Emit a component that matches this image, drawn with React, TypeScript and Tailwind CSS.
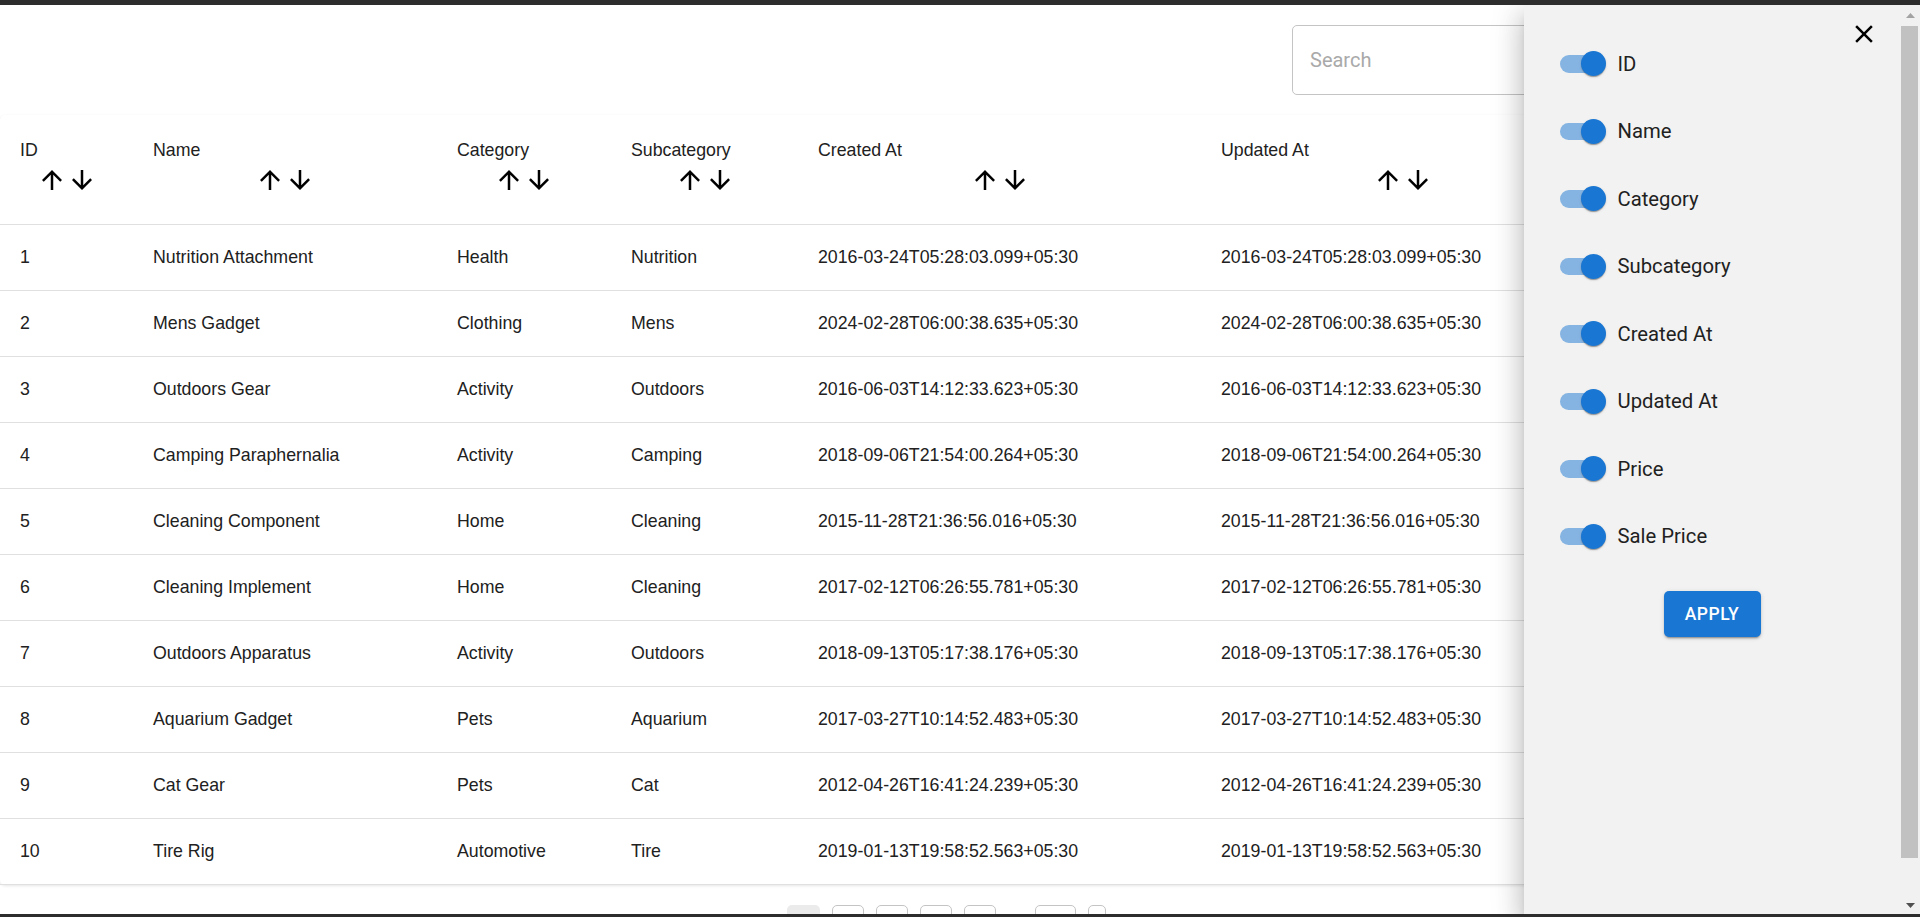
import React from "react";

const rows = [
  ["1", "Nutrition Attachment", "Health", "Nutrition", "2016-03-24T05:28:03.099+05:30"],
  ["2", "Mens Gadget", "Clothing", "Mens", "2024-02-28T06:00:38.635+05:30"],
  ["3", "Outdoors Gear", "Activity", "Outdoors", "2016-06-03T14:12:33.623+05:30"],
  ["4", "Camping Paraphernalia", "Activity", "Camping", "2018-09-06T21:54:00.264+05:30"],
  ["5", "Cleaning Component", "Home", "Cleaning", "2015-11-28T21:36:56.016+05:30"],
  ["6", "Cleaning Implement", "Home", "Cleaning", "2017-02-12T06:26:55.781+05:30"],
  ["7", "Outdoors Apparatus", "Activity", "Outdoors", "2018-09-13T05:17:38.176+05:30"],
  ["8", "Aquarium Gadget", "Pets", "Aquarium", "2017-03-27T10:14:52.483+05:30"],
  ["9", "Cat Gear", "Pets", "Cat", "2012-04-26T16:41:24.239+05:30"],
  ["10", "Tire Rig", "Automotive", "Tire", "2019-01-13T19:58:52.563+05:30"],
];

const cols = [
  { label: "ID", w: "w-[133px]" },
  { label: "Name", w: "w-[304px]" },
  { label: "Category", w: "w-[174px]" },
  { label: "Subcategory", w: "w-[187px]" },
  { label: "Created At", w: "w-[403px]" },
  { label: "Updated At", w: "w-[403px]" },
];

const toggles = ["ID", "Name", "Category", "Subcategory", "Created At", "Updated At", "Price", "Sale Price"];

function ArrowUp() {
  return (
    <span className="w-[30px] h-[30px] flex items-center justify-center">
      <svg width="30" height="30" viewBox="0 0 24 24" fill="#000">
        <path d="M4 12l1.41 1.41L11 7.83V20h2V7.83l5.58 5.59L20 12l-8-8-8 8z" />
      </svg>
    </span>
  );
}

function ArrowDown() {
  return (
    <span className="w-[30px] h-[30px] flex items-center justify-center">
      <svg width="30" height="30" viewBox="0 0 24 24" fill="#000">
        <path d="M20 12l-1.41-1.41L13 16.17V4h-2v12.17l-5.58-5.59L4 12l8 8 8-8z" />
      </svg>
    </span>
  );
}

function Switch() {
  return (
    <div className="relative w-[72.5px] h-[47.5px] shrink-0">
      <div className="absolute left-[15px] top-[15px] w-[42.5px] h-[17.5px] rounded-full bg-[#1976d2] opacity-50" />
      <div className="absolute left-[36.25px] top-[11.25px] w-[25px] h-[25px] rounded-full bg-[#1976d2] shadow-[0px_2px_1px_-1px_rgba(0,0,0,0.2),0px_1px_1px_0px_rgba(0,0,0,0.14),0px_1px_3px_0px_rgba(0,0,0,0.12)]" />
    </div>
  );
}

export default function App() {
  return (
    <div className="w-[1920px] h-[917px] flex flex-col overflow-hidden bg-white">
      <div className="h-[5px] bg-[#2d2d2d] shrink-0" />
      <div className="flex-1 flex min-h-0">
        <div className="w-[1900px] relative overflow-hidden flex flex-col font-['Liberation_Sans',Arial,sans-serif] text-[#212121]">
          <div className="flex justify-end pt-[20px] pr-[20px]">
            <input
              placeholder="Search"
              className="w-[588px] h-[70px] border border-[#c4c4c4] rounded-[5px] pl-[17px] text-[20px] font-['Roboto',sans-serif] outline-none placeholder:text-[#a9a9a9]"
            />
          </div>
          <div className="mt-[20px] rounded-[5px] shadow-[0px_1px_3px_0px_rgba(0,0,0,0.10)] bg-white">
            <div className="h-[110px] flex border-b border-[#e0e0e0]">
              {cols.map((c) => (
                <div key={c.label} className={`${c.w} shrink-0 pt-[20px] px-[20px] flex flex-col`}>
                  <div className="h-[30px] leading-[30px] text-[17.75px]">{c.label}</div>
                  <div className="h-[30px] flex justify-center">
                    <ArrowUp />
                    <ArrowDown />
                  </div>
                </div>
              ))}
              <div className="flex-1" />
            </div>
            {rows.map((r) => (
              <div key={r[0]} className="h-[66px] flex items-center border-b border-[#e0e0e0] text-[17.75px] leading-[25px]">
                {[r[0], r[1], r[2], r[3], r[4], r[4]].map((v, i) => (
                  <div key={i} className={`${cols[i].w} shrink-0 px-[20px] whitespace-nowrap`}>
                    {v}
                  </div>
                ))}
                <div className="flex-1" />
              </div>
            ))}
          </div>
          <div className="mt-[20px] flex justify-center gap-[12px] text-[16px] font-['Roboto',sans-serif] pr-[8px]">
            <div className="w-[33px] h-[33px] rounded-[5px] bg-[#ebebeb] flex justify-center pt-[6px]">1</div>
            <div className="w-[32px] h-[33px] rounded-[5px] border border-[#c4c4c4] flex justify-center pt-[5px]">2</div>
            <div className="w-[32px] h-[33px] rounded-[5px] border border-[#c4c4c4] flex justify-center pt-[5px]">3</div>
            <div className="w-[32px] h-[33px] rounded-[5px] border border-[#c4c4c4] flex justify-center pt-[5px]">4</div>
            <div className="w-[32px] h-[33px] rounded-[5px] border border-[#c4c4c4] flex justify-center pt-[5px]">5</div>
            <div className="w-[15px] h-[33px] flex justify-center pt-[5px]">…</div>
            <div className="w-[41px] h-[33px] rounded-[5px] border border-[#c4c4c4] flex justify-center pt-[5px]">100</div>
            <div className="w-[18px] h-[33px] rounded-[5px] border border-[#c4c4c4] flex justify-center pt-[5px]">›</div>
          </div>

          {/* Drawer overlay */}
          <div className="absolute top-0 right-0 bottom-0 w-[376px] bg-[#f2f2f2] shadow-[0px_8px_10px_-5px_rgba(0,0,0,0.2),0px_16px_24px_2px_rgba(0,0,0,0.14),0px_6px_30px_5px_rgba(0,0,0,0.12)] font-['Roboto',sans-serif] text-[#212121] flex flex-col">
            <button className="absolute top-[4px] right-[11px] w-[50px] h-[50px] flex items-center justify-center">
              <svg width="30" height="30" viewBox="0 0 24 24" fill="#000">
                <path d="M19 6.41 17.59 5 12 10.59 6.41 5 5 6.41 10.59 12 5 17.59 6.41 19 12 13.41 17.59 19 19 17.59 13.41 12z" />
              </svg>
            </button>
            <div className="pl-[21px] pt-[35px] flex flex-col gap-[20px]">
              {toggles.map((t) => (
                <div key={t} className="flex items-center h-[47.5px]">
                  <Switch />
                  <span className="text-[20.25px] leading-[30px]">{t}</span>
                </div>
              ))}
            </div>
            <div className="flex justify-center mt-[31px]">
              <button className="w-[97px] h-[45.5px] rounded-[5px] bg-[#1976d2] text-white text-[17.5px] font-medium uppercase tracking-[0.03em] shadow-[0px_3px_1px_-2px_rgba(0,0,0,0.2),0px_2px_2px_0px_rgba(0,0,0,0.14),0px_1px_5px_0px_rgba(0,0,0,0.12)]">
                Apply
              </button>
            </div>
          </div>
        </div>

        {/* Scrollbar drawing */}
        <div className="w-[20px] bg-[#f1f1f1] flex flex-col shrink-0">
          <div className="h-[21px] flex items-center justify-center">
            <svg width="9" height="5" viewBox="0 0 9 5"><polygon points="0,5 4.5,0 9,5" fill="#a3a3a3" /></svg>
          </div>
          <div className="ml-[1px] w-[17px] h-[832px] bg-[#c1c1c1]" />
          <div className="flex-1" />
          <div className="h-[17px] flex items-center justify-center">
            <svg width="9" height="5" viewBox="0 0 9 5"><polygon points="0,0 9,0 4.5,5" fill="#505050" /></svg>
          </div>
        </div>
      </div>
      <div className="h-[3px] bg-[#2d2d2d] shrink-0" />
    </div>
  );
}
